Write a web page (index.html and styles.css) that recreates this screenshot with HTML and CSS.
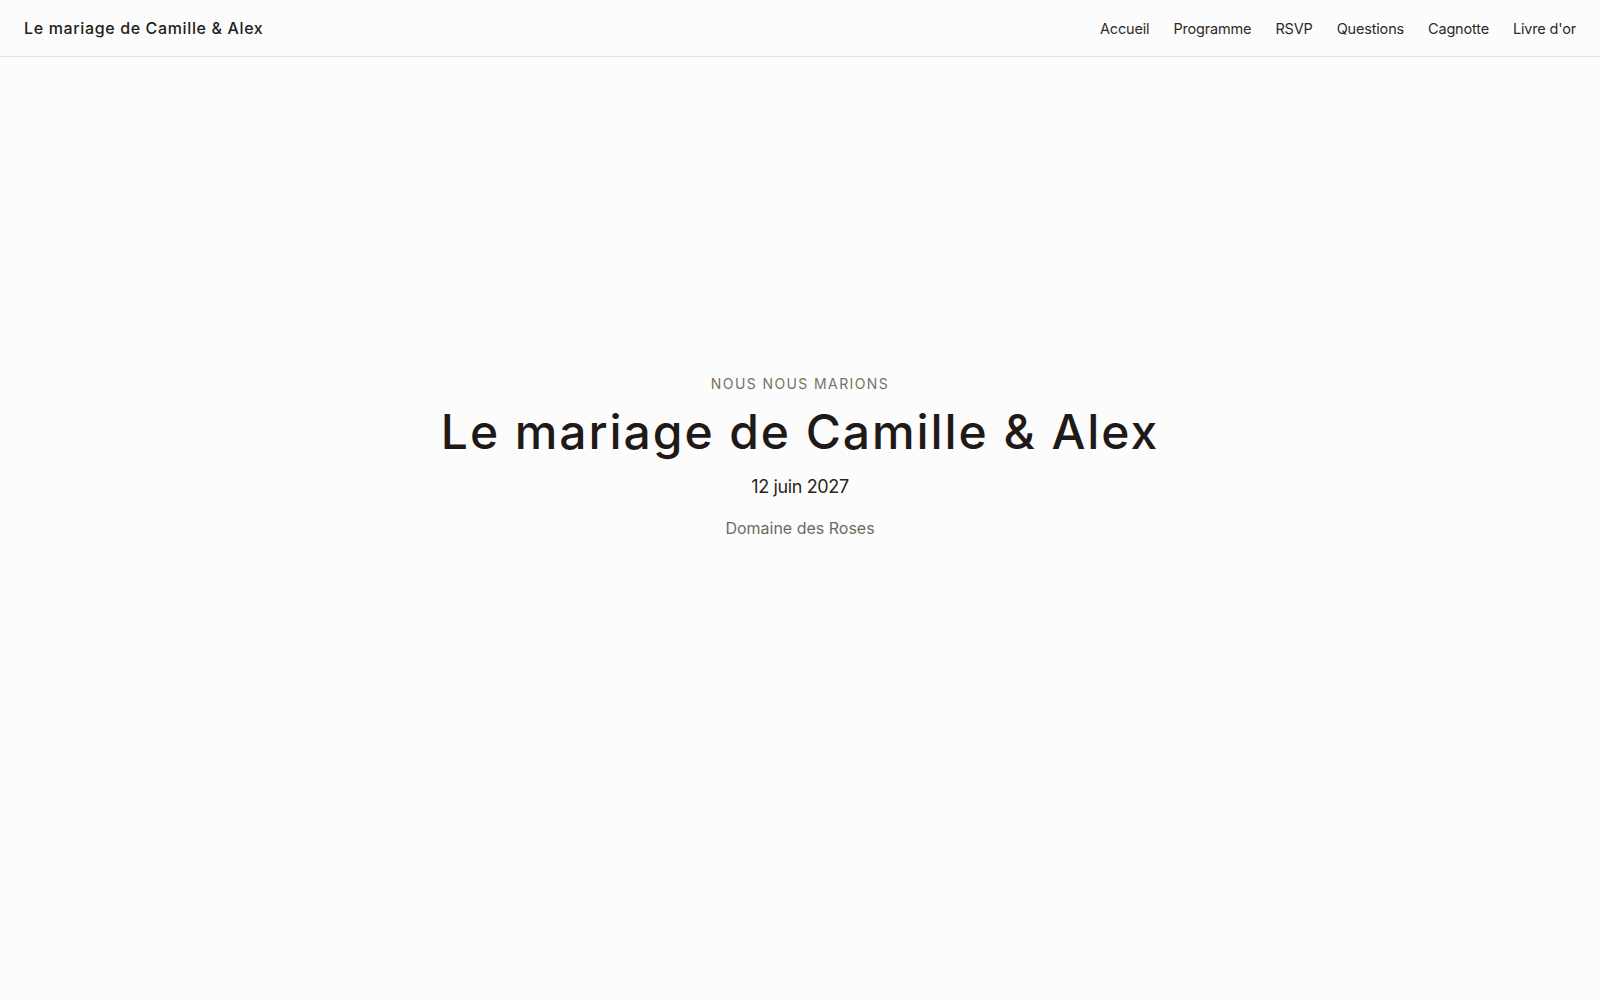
FILE: index.html
```html
<!DOCTYPE html>
<html lang="fr">
<head>
<meta charset="utf-8">
<title>Le mariage de Camille &amp; Alex</title>
<link rel="stylesheet" href="styles.css">
</head>
<body>
<header class="site-header">
  <a class="brand" href="#">Le mariage de Camille &amp; Alex</a>
  <nav class="nav">
    <a href="#">Accueil</a>
    <a href="#">Programme</a>
    <a href="#">RSVP</a>
    <a href="#">Questions</a>
    <a href="#">Cagnotte</a>
    <a href="#">Livre d'or</a>
  </nav>
</header>
<main>
  <section class="hero">
    <p class="eyebrow">Nous nous marions</p>
    <h1 class="title">Le mariage de Camille &amp; Alex</h1>
    <p class="date">12 juin 2027</p>
    <p class="venue">Domaine des Roses</p>
  </section>
</main>
</body>
</html>
```
FILE: styles.css
```css
* { box-sizing: border-box; }
html, body { margin: 0; padding: 0; }
body {
  background: #fcfcfc;
  color: #1f1a17;
  font-family: "Inter", "Liberation Sans", sans-serif;
  min-height: 100vh;
}
a { color: inherit; text-decoration: none; }

.site-header {
  height: 57px;
  padding: 0 24px;
  display: flex;
  align-items: center;
  justify-content: space-between;
  border-bottom: 1px solid #e6e4e2;
  background: #fcfcfc;
}
.brand {
  font-family: "Inter", "Liberation Sans", sans-serif;
  font-weight: 500;
  font-size: 16px;
  letter-spacing: 0.04em;
  color: #231d1a;
}
.nav {
  display: flex;
  gap: 24px;
  font-size: 14.5px;
  letter-spacing: -0.012em;
  color: #2e2926;
}

.hero {
  min-height: 80vh;
  display: flex;
  flex-direction: column;
  align-items: center;
  justify-content: center;
  text-align: center;
}
.eyebrow {
  margin: 0;
  font-size: 14px;
  line-height: 20px;
  letter-spacing: 0.1em;
  text-transform: uppercase;
  color: #7b7060;
}
.title {
  margin: 9px 0 0;
  font-family: "Inter", "Liberation Sans", sans-serif;
  font-weight: 500;
  font-size: 48px;
  line-height: 1.2;
  letter-spacing: 0.04em;
  color: #1f1a17;
}
.date {
  margin: 13px 0 0;
  font-size: 18px;
  line-height: 28px;
  letter-spacing: -0.02em;
  color: #2a2421;
}
.venue {
  margin: 15px 0 0;
  font-size: 16px;
  line-height: 24px;
  color: #6f6963;
}
```
